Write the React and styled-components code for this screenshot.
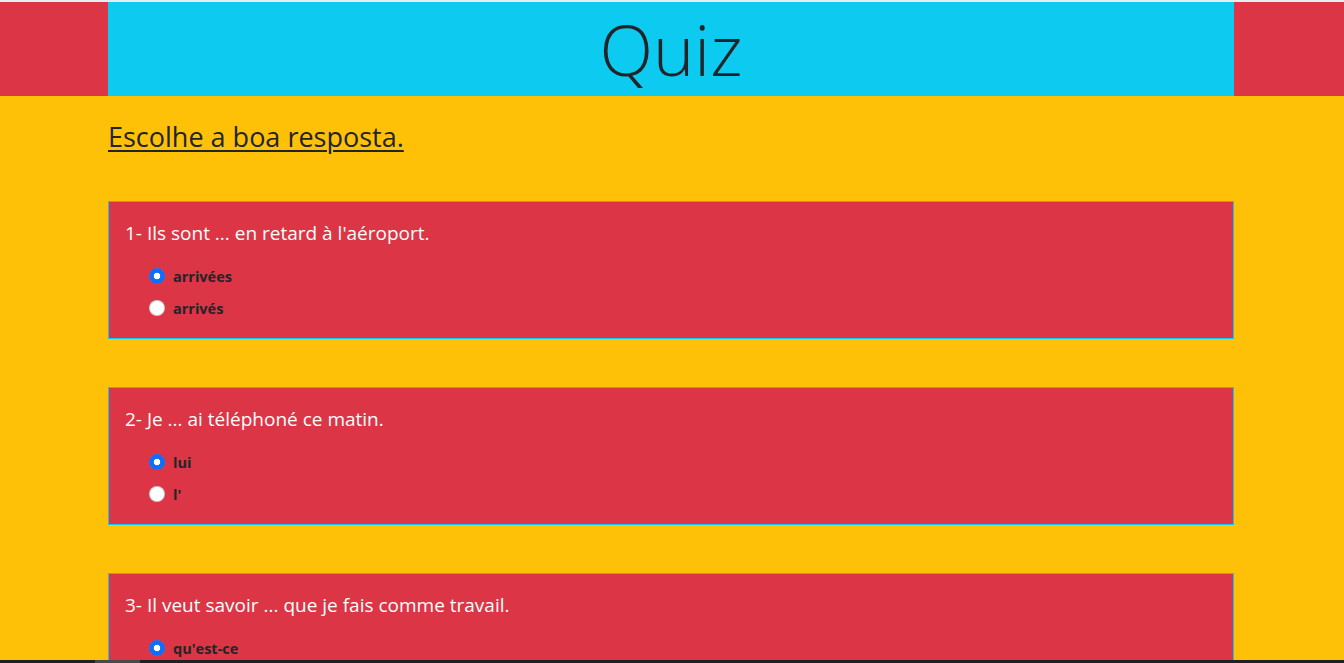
import React from 'react';
import styled, { createGlobalStyle } from 'styled-components';

const GlobalStyle = createGlobalStyle`
  html, body {
    margin: 0;
    padding: 0;
  }
  body {
    background-color: #ffc107;
    font-family: "Open Sans", "Noto Sans", sans-serif;
    color: #212529;
  }
`

const TopLine = styled.div`
  height: 2px;
  background-color: #e4eef2;
`

const Header = styled.header`
  background-color: #dc3545;
  padding: 0 110px 0 108px;
`

const HeaderInner = styled.div`
  height: 94px;
  background-color: #0dcaf0;
  display: flex;
  justify-content: center;
  align-items: center;
`

const Title = styled.h1`
  margin: 0;
  font-size: 70px;
  font-weight: 300;
  line-height: 1;
  color: #212529;
`

const Main = styled.main`
  margin: 0 110px 0 108px;
  padding-top: 24px;
`

const Instruction = styled.h3`
  margin: 0 0 48px;
  font-size: 27px;
  font-weight: 400;
  line-height: 33px;
  text-decoration: underline;
  text-decoration-thickness: 2px;
  text-underline-offset: 3px;
`

const Card = styled.section`
  background-color: #dc3545;
  border: 1px solid #0dcaf0;
  padding: 17px 16px 18px;
  margin-bottom: 48px;
`

const Question = styled.p`
  margin: 0 0 16px;
  color: #fff;
  font-size: 19px;
  line-height: 29px;
`

const Options = styled.div`
  padding-left: 24px;
  display: flex;
  flex-direction: column;
  gap: 8px;
`

const Option = styled.label`
  display: flex;
  align-items: center;
  gap: 8px;
  height: 24px;
  font-size: 14.5px;
  font-weight: 700;
  color: #212529;
`

const Radio = styled.input.attrs({ type: 'radio' })`
  appearance: none;
  margin: 0;
  width: 16px;
  height: 16px;
  border-radius: 50%;
  border: 1px solid rgba(0, 0, 0, 0.2);
  background-color: #fff;
  box-sizing: border-box;
  &:checked {
    border-color: #0d6efd;
    background-image: radial-gradient(circle, #fff 0 3px, #0d6efd 3.6px);
  }
`

const ScrollBar = styled.div`
  position: fixed;
  left: 0;
  right: 0;
  bottom: 0;
  height: 3px;
  background-color: #202124;
`

const Thumb = styled.div`
  margin-left: 95px;
  width: 45px;
  height: 3px;
  background-color: #4a4a4a;
`

const questions = [
  { text: "1- Ils sont ... en retard à l'aéroport.", options: ['arrivées', 'arrivés'] },
  { text: '2- Je ... ai téléphoné ce matin.', options: ['lui', "l'"] },
  { text: '3- Il veut savoir ... que je fais comme travail.', options: ["qu'est-ce", 'ce'] },
  { text: '4- Elle ... est allée hier.', options: ['y', 'en'] },
]

export default function App() {
  return (
    <>
      <GlobalStyle />
      <TopLine />
      <Header>
        <HeaderInner>
          <Title>Quiz</Title>
        </HeaderInner>
      </Header>
      <Main>
        <Instruction>Escolhe a boa resposta.</Instruction>
        {questions.map((q, i) => (
          <Card key={i}>
            <Question>{q.text}</Question>
            <Options>
              {q.options.map((o, j) => (
                <Option key={j}>
                  <Radio name={'q' + i} defaultChecked={j === 0} />
                  {o}
                </Option>
              ))}
            </Options>
          </Card>
        ))}
      </Main>
      <ScrollBar>
        <Thumb />
      </ScrollBar>
    </>
  );
}
